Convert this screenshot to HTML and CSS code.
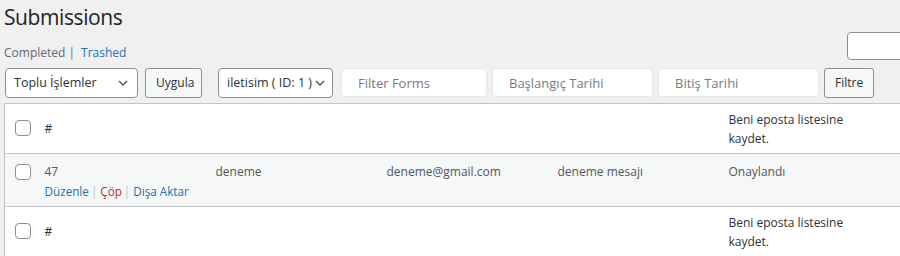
FILE: index.html
```html
<!DOCTYPE html>
<html lang="tr">
<head>
    <meta charset="UTF-8" />
    <title>Submissions</title>
    <link rel="stylesheet" href="styles.css">
</head>
<body>
    <div class="wrap">
        <h1 class="page-title">Submissions</h1>
        <div class="top-row">
            <ul class="subsubsub">
                <li>Completed |</li>
                <li><a href="#">Trashed</a></li>
            </ul>
            <input type="search" class="search-box">
        </div>
        <div class="tablenav">
            <div class="select bulk">Toplu İşlemler
                <svg class="chev" viewBox="0 0 20 20"><path d="M5 7.5l5 5 5-5" fill="none" stroke="#50575e" stroke-width="1.8"/></svg>
            </div>
            <button class="button apply">Uygula</button>
            <div class="select form-select">iletisim ( ID: 1 )
                <svg class="chev" viewBox="0 0 20 20"><path d="M5 7.5l5 5 5-5" fill="none" stroke="#50575e" stroke-width="1.8"/></svg>
            </div>
            <input type="text" class="field f-forms" placeholder="Filter Forms">
            <input type="text" class="field f-date" placeholder="Başlangıç Tarihi">
            <input type="text" class="field f-date" placeholder="Bitiş Tarihi">
            <button class="button">Filtre</button>
        </div>
        <table class="list-table">
            <colgroup>
                <col class="c-check"><col class="c-col"><col class="c-col"><col class="c-col"><col class="c-col"><col class="c-col"><col>
            </colgroup>
            <thead>
                <tr>
                    <th class="check"><span class="cb"></span></th>
                    <th>#</th><th></th><th></th><th></th>
                    <th>Beni eposta listesine kaydet.</th>
                    <th></th>
                </tr>
            </thead>
            <tbody>
                <tr>
                    <td class="check"><span class="cb"></span></td>
                    <td>47
                        <div class="row-actions"><a href="#">Düzenle</a><span class="sep">|</span><a href="#" class="trash">Çöp</a><span class="sep">|</span><a href="#">Dışa Aktar</a></div>
                    </td>
                    <td>deneme</td>
                    <td>deneme@gmail.com</td>
                    <td>deneme mesajı</td>
                    <td>Onaylandı</td>
                    <td></td>
                </tr>
            </tbody>
            <tfoot>
                <tr>
                    <th class="check"><span class="cb"></span></th>
                    <th>#</th><th></th><th></th><th></th>
                    <th>Beni eposta listesine kaydet.</th>
                    <th></th>
                </tr>
            </tfoot>
        </table>
    </div>
</body>
</html>
```

FILE: styles.css
```css
body {
    margin: 0;
    background: #f0f0f1;
    color: #3c434a;
    font-family: 'Open Sans', sans-serif;
    font-size: 12px;
    line-height: 1.4;
    overflow: hidden;
}
.wrap {
    width: 1100px;
    padding-left: 4px;
}
.page-title {
    margin: 0;
    padding: 2px 0 0 0;
    font-size: 21px;
    letter-spacing: -0.4px;
    font-weight: 400;
    line-height: 30px;
    color: #1d2327;
}
.top-row {
    display: flex;
    justify-content: space-between;
    align-items: flex-start;
}
.subsubsub {
    list-style: none;
    margin: 13px 0 0 0;
    padding: 0;
    display: flex;
    gap: 6px;
    color: #646970;
}
.subsubsub a {
    color: #2271b1;
    text-decoration: none;
}
.search-box {
    width: 257px;
    height: 28px;
    box-sizing: border-box;
    border: 1px solid #8c8f94;
    border-radius: 4px;
    background: #fff;
}
.tablenav {
    display: flex;
    align-items: center;
    margin-top: 6px;
    height: 30px;
    padding-left: 1px;
    white-space: nowrap;
}
.select {
    height: 30px;
    box-sizing: border-box;
    border: 1px solid #8c8f94;
    border-radius: 4px;
    background: #fff;
    color: #2c3338;
    font-size: 12.5px;
    display: flex;
    align-items: center;
    justify-content: space-between;
    padding: 0 6px 0 8px;
}
.chev {
    width: 16px;
    height: 16px;
    flex: none;
}
.bulk {
    width: 133px;
    margin-right: 7px;
}
.form-select {
    width: 115px;
    margin-right: 8px;
    padding-right: 4px;
}
.button {
    height: 30px;
    box-sizing: border-box;
    border: 1px solid #8c8f94;
    border-radius: 3px;
    background: #f6f7f7;
    color: #2c3338;
    font-family: inherit;
    font-size: 12px;
    padding: 0 10px;
}
.apply {
    width: 57px;
    margin-right: 16px;
}
.field {
    height: 29px;
    box-sizing: border-box;
    border: 1px solid #e6e6e7;
    border-radius: 4px;
    background: #fff;
    font-family: inherit;
    font-size: 13px;
    padding: 0 16px;
    margin-right: 5px;
}
.field::placeholder {
    color: #787c82;
}
.f-forms {
    width: 146px;
}
.f-date {
    width: 161px;
}
.list-table {
    margin-top: 5px;
    width: 1100px;
    table-layout: fixed;
    border-collapse: collapse;
    border: 1px solid #c3c4c7;
    background: #fff;
}
.c-check {
    width: 30px;
}
.c-col {
    width: 171px;
}
.list-table th {
    text-align: left;
    font-weight: 400;
    color: #2c3338;
    padding: 6px 10px 5px 10px;
    line-height: 19px;
    vertical-align: middle;
}
.list-table thead tr {
    border-bottom: 1px solid #c3c4c7;
}
.list-table tbody tr {
    background: #f6f7f7;
    border-bottom: 1px solid #c3c4c7;
}
.list-table td {
    color: #50575e;
    padding: 8px 10px 6px 10px;
    line-height: 19px;
    vertical-align: top;
}
.list-table .check {
    padding: 0 0 0 10px;
}
.list-table td.check {
    padding-top: 10px;
}
.cb {
    display: block;
    width: 14px;
    height: 14px;
    border: 1px solid #8c8f94;
    border-radius: 4px;
    background: #fff;
}
.row-actions {
    padding-top: 1px;
    line-height: 18px;
    white-space: nowrap;
    font-size: 11.7px;
}
.row-actions a {
    color: #2271b1;
    text-decoration: none;
}
.row-actions a.trash {
    color: #b32d2e;
}
.sep {
    color: #c3c4c7;
    margin: 0 3px 0 2px;
}
```
